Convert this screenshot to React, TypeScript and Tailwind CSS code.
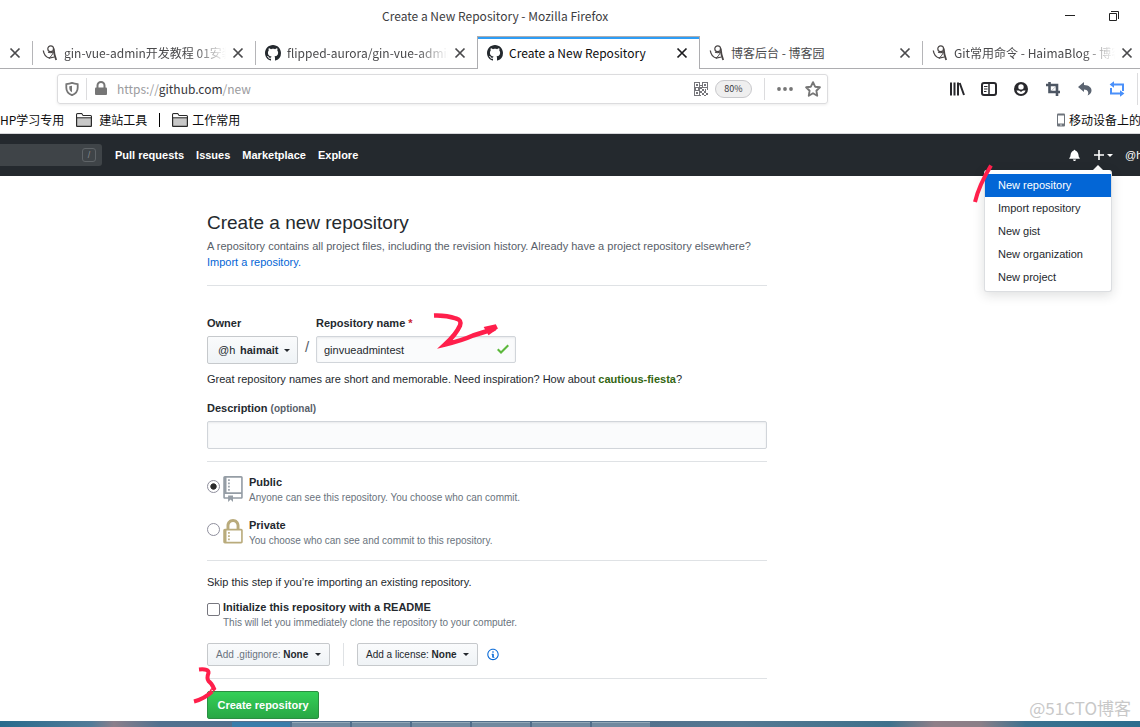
import React from "react";

const UI = "font-['Noto_Sans_CJK_SC','Noto_Sans',sans-serif]";
const WEB = "font-['Liberation_Sans',Arial,sans-serif]";

function GitHubMark() {
  return (
    <svg viewBox="0 0 16 16" className="h-4 w-4 shrink-0" fill="#24292e" aria-hidden="true">
      <path d="M8 0C3.58 0 0 3.58 0 8c0 3.54 2.29 6.53 5.47 7.59.4.07.55-.17.55-.38 0-.19-.01-.82-.01-1.49-2.01.37-2.53-.49-2.69-.94-.09-.23-.48-.94-.82-1.13-.28-.15-.68-.52-.01-.53.63-.01 1.08.58 1.23.82.72 1.21 1.87.87 2.33.66.07-.52.28-.87.51-1.07-1.78-.2-3.64-.89-3.64-3.95 0-.87.31-1.59.82-2.15-.08-.2-.36-1.02.08-2.12 0 0 .67-.21 2.2.82.64-.18 1.32-.27 2-.27s1.36.09 2 .27c1.53-1.04 2.2-.82 2.2-.82.44 1.1.16 1.92.08 2.12.51.56.82 1.27.82 2.15 0 3.07-1.87 3.75-3.65 3.95.29.25.54.73.54 1.48 0 1.07-.01 1.93-.01 2.2 0 .21.15.46.55.38A8.01 8.01 0 0 0 16 8c0-4.42-3.58-8-8-8z" />
    </svg>
  );
}

function BlogMark() {
  return (
    <svg viewBox="0 0 16 16" className="h-4 w-4 shrink-0" fill="none" stroke="#4a4646" aria-hidden="true">
      <path d="M1.300 5.500C1.800 9.500 4.500 12.300 7.500 13.200" strokeWidth="1.300" />
      <path d="M7 13.300c1.500-1.200 3.200-3.400 4.600-6.200" strokeWidth="1" />
      <circle cx="8.700" cy="3.800" r="2.900" strokeWidth="1.200" />
      <path d="M11.700 3.500c.2 3.500 1 8 2.500 11.500" strokeWidth="1.800" />
      <path d="M6 7.300c2.200.8 4 .6 5.500-.8M7 13.200l5.500-1.200" strokeWidth="1.200" />
    </svg>
  );
}

function CloseButton({ dark = false }: { dark?: boolean }) {
  return (
    <button type="button" aria-label="Close tab" className="flex h-6 w-3 shrink-0 items-center justify-center">
      <svg viewBox="0 0 12 12" className="h-3 w-3" fill="none" stroke={dark ? "#1c1c1f" : "#4a4a4c"} strokeWidth="1.700">
        <path d="M1.500 1.500l9 9M10.500 1.500l-9 9" />
      </svg>
    </button>
  );
}

function TabTitle({ children, fade = false }: { children: React.ReactNode; fade?: boolean }) {
  return (
    <span
      className={
        fade
          ? "min-w-0 flex-1 overflow-hidden whitespace-nowrap [mask-image:linear-gradient(to_left,transparent,black_32px)]"
          : "min-w-0 flex-1 overflow-hidden whitespace-nowrap"
      }
    >
      {children}
    </span>
  );
}

function Caret() {
  return <span aria-hidden="true" className="inline-block border-x-[3px] border-t-[3px] border-x-transparent border-t-current" />;
}

function Folder() {
  return (
    <svg viewBox="0 0 16 14" className="h-[14px] w-4 shrink-0" aria-hidden="true">
      <path d="M.6 12.900V1.600Q.6.7 1.500.7h4.200l1.200 1.800h7.600q.9 0 .9.900v9.500q0 .5-.5.5H1.100q-.5 0-.5-.5z" fill="#c8c8c8" stroke="#2a2a2a" strokeWidth="1.200" />
      <path d="M1.200 1.300h4.300l1.200 1.800h8v1.400H1.200z" fill="#fff" />
      <path d="M.6 4.800h14.800" stroke="#2a2a2a" strokeWidth="1" />
    </svg>
  );
}

function TitleBar() {
  return (
    <div className="flex h-9 items-start">
      <div className="w-[382px] shrink" />
      <h1 className="flex-1 whitespace-nowrap pt-1.5 text-[12px] leading-5 text-[#3d3d3f]">Create a New Repository - Mozilla Firefox</h1>
      <div className="flex gap-7 pr-[18px] pt-2">
        <button type="button" aria-label="Minimize" className="flex h-4 w-4 items-center justify-center">
          <svg viewBox="0 0 12 12" className="h-3 w-3"><path d="M1 5h10v1H1z" fill="#222" /></svg>
        </button>
        <button type="button" aria-label="Restore" className="flex h-4 w-4 items-center justify-center">
          <svg viewBox="0 0 12 12" className="h-3 w-3" fill="none" stroke="#222"><path d="M1.500 3.500h7v7h-7zM3 1.500h7.500V9" /></svg>
        </button>
      </div>
    </div>
  );
}

const idleTab = "flex items-center gap-[6px] border-b border-[#adadb0] pt-px shrink-0";

function TabStrip() {
  return (
    <div className="flex h-[33px] overflow-hidden text-[12px] leading-5 text-[#4a4a4c]">
      <div className={`${idleTab} w-8 justify-end pr-[11px]`}><CloseButton /></div>
      <div className={`${idleTab} w-[223px]`}>
        <span className="mr-[3px] h-6 border-l border-[#b5b5b8]" />
        <BlogMark />
        <TabTitle fade>gin-vue-admin开发教程 01安装</TabTitle>
        <span className="pr-[11px]"><CloseButton /></span>
      </div>
      <div className={`${idleTab} w-[222px]`}>
        <span className="mr-[3px] h-6 border-l border-[#b5b5b8]" />
        <GitHubMark />
        <TabTitle fade>flipped-aurora/gin-vue-admin</TabTitle>
        <span className="pr-[11px]"><CloseButton /></span>
      </div>
      <div className="flex w-[223px] shrink-0 items-center gap-[6px] border-x border-t border-[#adadb0] pl-[9px] pr-[11px] text-[#0c0c0d] shadow-[inset_0_2px_0_#2e9df5]">
        <GitHubMark />
        <TabTitle>Create a New Repository</TabTitle>
        <CloseButton dark />
      </div>
      <div className={`${idleTab} w-[222px] pl-[9px] pr-[11px]`}>
        <BlogMark />
        <TabTitle>博客后台 - 博客园</TabTitle>
        <CloseButton />
      </div>
      <div className={`${idleTab} min-w-[218px] flex-1`}>
        <span className="mr-[3px] h-6 border-l border-[#b5b5b8]" />
        <BlogMark />
        <TabTitle fade>Git常用命令 - HaimaBlog - 博客</TabTitle>
        <span className="pr-[7px]"><CloseButton /></span>
      </div>
    </div>
  );
}

function NavToolbar() {
  return (
    <div className="flex h-[39px] items-center">
      <div className="ml-[57px] flex h-[30px] w-[771px] shrink items-center rounded-[3px] border border-[#dcdcde] px-[7px] shadow-[0_1px_3px_rgba(0,0,0,0.08)]">
        <svg viewBox="0 0 14 14" className="h-[14px] w-[14px] shrink-0" fill="none" stroke="#767676" strokeWidth="1.800">
          <path d="M1.300 2.200Q4.500 1.800 7 .9q2.500.9 5.700 1.300v3.500c0 3.400-2 6-5.700 7.500-3.700-1.500-5.700-4.100-5.700-7.500z" />
          <path d="M7 3.800v6.400C5.200 9.200 4.300 7.700 4.300 5.700V4.300z" fill="#767676" stroke="none" />
        </svg>
        <span className="mx-[7px] h-[22px] border-l border-[#dcdcde]" />
        <svg viewBox="0 0 14 15" className="h-[15px] w-[14px] shrink-0">
          <path d="M3.500 7V4.500a3.500 3.500 0 0 1 7 0V7" fill="none" stroke="#767676" strokeWidth="2" />
          <rect x="1" y="6.500" width="12" height="7.500" rx="1" fill="#767676" />
        </svg>
        <div className="relative ml-[9px] h-5 min-w-0 flex-1 text-[12px] leading-5">
          <div aria-hidden="true" className="whitespace-nowrap text-[#9b9b9e]">https://<span className="text-[#38383d]">github.com</span>/new</div>
          <input id="address" type="text" aria-label="Address" className="absolute inset-0 w-full bg-transparent outline-none" />
        </div>
        <svg viewBox="0 0 14 14" className="h-[14px] w-[14px] shrink-0" fill="#75757a">
          <path fillRule="evenodd" d="M0 0h6v6H0zM1 1v4h4V1zM8 0h6v6H8zM9 1v4h4V1zM0 8h6v6H0zM1 9v4h4V9z" />
          <path d="M2 2h2v2H2zM10 2h2v2h-2zM2 10h2v2H2zM6 3h2v1H6zM6 5h2v2H6zM0 6h2v2H0zM4 6h2v2H4zM8 7h2v2H8zM11 7h1v2h-1zM13 6h1v2h-1zM6 9h2v2H6zM10 9h2v2h-2zM8 11h2v2H8zM12 11h2v2h-2zM10 13h2v1h-2zM6 13h1v1H6z" />
        </svg>
        <button type="button" className="ml-[7px] h-[18px] w-[37px] rounded-full border border-[#c9c9cc] bg-[#efefef] text-[9px] leading-4 text-[#38383d]">80%</button>
        <span className="ml-3 mr-[12px] h-[22px] border-l border-[#dcdcde]" />
        <button type="button" aria-label="Page actions" className="mr-3">
          <svg viewBox="0 0 16 4" className="h-1 w-4" fill="#767676"><circle cx="2" cy="2" r="1.900" /><circle cx="8" cy="2" r="1.900" /><circle cx="14" cy="2" r="1.900" /></svg>
        </button>
        <button type="button" aria-label="Bookmark this page" className="-mr-px">
          <svg viewBox="0 0 16 16" className="h-4 w-4" fill="none" stroke="#767676" strokeWidth="1.900" strokeLinejoin="round">
            <path d="M8 1.200l2.100 4.500 4.800.6-3.500 3.400.8 5L8 12.300l-4.200 2.400.8-5L1.100 6.300l4.800-.6z" />
          </svg>
        </button>
      </div>
      <div className="ml-auto flex shrink-0 items-center gap-4">
        <svg viewBox="0 0 16 16" className="h-4 w-4" fill="none" stroke="#28282c" strokeWidth="2"><path d="M2 1.500v13M5.500 1.500v13M9 1.500v13M10.700 2l4.300 12" /></svg>
        <svg viewBox="0 0 16 16" className="h-4 w-4" fill="none" stroke="#28282c" strokeWidth="2">
          <rect x="1" y="2" width="14" height="12" rx="2" /><path d="M8 2v12" strokeWidth="1.500" /><path d="M3 5.500h3.500M3 8h3.500M3 10.500h2.500" strokeWidth="1" />
        </svg>
        <svg viewBox="0 0 16 16" className="h-4 w-4"><circle cx="8" cy="8" r="7" fill="#28282c" /><circle cx="8" cy="6" r="2.700" fill="#fff" /><path d="M3.500 9.500h9c-.6 2-2.300 3.500-4.500 3.500s-3.900-1.500-4.500-3.500z" fill="#fff" /><path d="M5.500 8.700h5L8 11z" fill="#28282c" /></svg>
        <svg viewBox="0 0 16 16" className="h-4 w-4" fill="none" stroke="#4d5663" strokeWidth="2.600"><path d="M1 4h11v11M4.500 1v10h10.500" /><path d="M12 4.500l-7 6.500" strokeWidth="1" opacity=".35" /></svg>
        <svg viewBox="0 0 16 16" className="h-4 w-4" fill="#5b6471"><path d="M1 6l6-5v3c5 0 8 3 7.500 6-.3 2-1.800 3.800-4 4.500C12.300 12 11 8.500 7 8.500V11z" /></svg>
        <svg viewBox="0 0 16 16" className="h-4 w-4" fill="none" stroke="#4a90fa" strokeWidth="2"><path d="M4 3.500h10V10M2 7v5.500h10" /><path d="M5 .2L.6 3.500 5 6.800zM11 9.200l4.400 3.300-4.400 3.300z" fill="#4a90fa" stroke="none" /></svg>
        <span className="-ml-1 h-8 w-[3px] border-l border-[#dcdcde]" />
      </div>
    </div>
  );
}

function BookmarksBar() {
  return (
    <div className="flex h-[26px] items-center overflow-hidden whitespace-nowrap border-b border-[#d7d7da] pb-px text-[12px] leading-5 text-[#0c0c0d]">
      <a href="#php">HP学习专用</a>
      <a href="#sites" className="ml-3 flex items-center gap-[7px]"><Folder />建站工具</a>
      <span className="mx-3 h-[14px] border-l border-black" />
      <a href="#work" className="flex items-center gap-1"><Folder />工作常用</a>
      <a href="#mobile" className="-mr-px ml-auto flex items-center gap-[3px]">
        <svg viewBox="0 0 10 14" className="h-[14px] w-[10px]"><rect x="1" y=".5" width="8" height="13" rx="1" fill="#6e747c" /><path d="M2 2.500h6v8H2z" fill="#fff" /><circle cx="5" cy="12" r=".7" fill="#fff" /></svg>
        移动设备上的
      </a>
    </div>
  );
}

const menuItems = ["Import repository", "New gist", "New organization", "New project"];

function SiteHeader() {
  return (
    <header className="flex h-[42px] shrink-0 items-center bg-[#24292e] text-[11px] font-bold text-white">
      <div className="relative h-[22px] w-[102px] rounded-r-[3px] bg-[#3f4448]">
        <label htmlFor="search" className="sr-only">Search</label>
        <input id="search" type="text" className="h-full w-full bg-transparent px-2 outline-none" />
        <span className="absolute right-[6px] top-1 h-[14px] w-[14px] rounded-[3px] border border-[#5f6468] text-center text-[9px] font-normal leading-3 text-[#85898d]">/</span>
      </div>
      <nav className="flex gap-3 pl-[13px]">
        <a href="#pulls">Pull requests</a>
        <a href="#issues">Issues</a>
        <a href="#marketplace">Marketplace</a>
        <a href="#explore">Explore</a>
      </nav>
      <div className="ml-auto flex items-center">
        <button type="button" aria-label="Notifications" className="mr-[14px]">
          <svg viewBox="0 0 14 16" className="h-3 w-[11px]" fill="#fff"><path d="M14 12v1H0v-1l.73-.58c.77-.77.81-2.55 1.19-4.42C2.69 3.23 6 2 6 2c0-.55.45-1 1-1s1 .45 1 1c0 0 3.390 1.230 4.160 5 .38 1.880.42 3.660 1.190 4.420l.66.58H14zm-7 4c1.110 0 2-.89 2-2H5c0 1.110.89 2 2 2z" /></svg>
        </button>
        <div className="relative mr-3">
          <button type="button" aria-label="Create new" aria-expanded="true" className="flex items-center gap-[3px]">
            <svg viewBox="0 0 10 10" className="h-[10px] w-[10px]" stroke="#fff" strokeWidth="1.600"><path d="M5 0v10M0 5h10" /></svg>
            <Caret />
          </button>
          <div className="absolute right-px top-[15px] z-10 w-[128px]">
            <span aria-hidden="true" className="mx-auto mr-[9px] block h-[5px] w-[10px] border-x-[5px] border-b-[5px] border-x-transparent border-b-white" />
            <ul className="rounded-[3px] border border-[#dcdee1] border-t-white bg-white pb-[2px] pt-[3px] font-normal leading-[23px] text-[#24292e] shadow-[0_3px_12px_rgba(27,31,35,0.15)]">
              <li><a href="#new" className="block bg-[#0366d6] pl-[13px] text-white">New repository</a></li>
              {menuItems.map((t) => (
                <li key={t}><a href="#new" className="block pl-[13px]">{t}</a></li>
              ))}
            </ul>
          </div>
        </div>
        <span className="w-[15px] overflow-hidden whitespace-nowrap font-normal">@h</span>
      </div>
    </header>
  );
}

const smallButton = "flex items-center rounded-[2px] border border-[#c6c9cc] bg-gradient-to-b from-[#fafbfc] to-[#eff3f6] text-[#24292e]";
const field = "rounded-[2px] border border-[#d1d5da] bg-[#fafbfc] px-[7px] text-[11px] shadow-[inset_0_1px_2px_rgba(27,31,35,0.075)] outline-none";
const note = "text-[10px] text-[#6a737d]";

function Radio({ id, checked }: { id: string; checked?: boolean }) {
  return (
    <input
      id={id}
      type="radio"
      name="visibility"
      defaultChecked={checked}
      className="mt-[5px] h-[13px] w-[13px] shrink-0 appearance-none rounded-full border border-[#8f8f9d] bg-white checked:bg-[radial-gradient(circle_closest-side,#2b2b2b_50%,transparent_65%)]"
    />
  );
}

function Form() {
  return (
    <main className="ml-[207px] w-[560px] max-w-full pt-9 text-[11px] leading-4 text-[#24292e]">
      <h2 className="text-[19px] leading-[22px]">Create a new repository</h2>
      <p className="mt-1 border-b border-[#dfe2e5] pb-[15px] text-[#586069]">
        A repository contains all project files, including the revision history. Already have a project repository elsewhere?
        <br />
        <a href="#import" className="text-[#0366d6]">Import a repository.</a>
      </p>

      <div className="mt-[29px] flex">
        <div>
          <span className="block font-bold">Owner</span>
          <button type="button" aria-haspopup="menu" className={`${smallButton} mt-[5px] h-7 w-[91px] gap-[5px] pl-[10px] text-[11px] font-bold`}>
            <span className="w-[17px] shrink-0 font-normal">@h</span>haimait<Caret />
          </button>
        </div>
        <span className="w-[18px] pt-[22px] text-center text-[15px] leading-5 text-[#586069]">/</span>
        <div>
          <label htmlFor="repo" className="block font-bold">Repository name <span className="text-[#cb2431]">*</span></label>
          <div className="relative mt-[5px]">
            <input id="repo" type="text" defaultValue="ginvueadmintest" className={`${field} block h-[27px] w-[200px]`} />
            <svg viewBox="0 0 12 16" className="absolute right-[6px] top-[5px] h-4 w-[14px]" fill="#5cb83c" aria-hidden="true"><path d="M12 5l-8 8-4-4 1.500-1.500L4 10l6.500-6.500z" /></svg>
          </div>
        </div>
      </div>
      <p className="mt-[7px]">Great repository names are short and memorable. Need inspiration? How about <strong className="text-[#336611]">cautious-fiesta</strong>?</p>

      <label htmlFor="description" className="mt-[13px] block font-bold">Description <span className="text-[10px] text-[#586069]">(optional)</span></label>
      <input id="description" type="text" className={`${field} mt-1 block h-7 w-full`} />

      <fieldset className="mt-3 border-y border-[#dfe2e5] pb-3 pt-[13px]">
        <legend className="sr-only">Visibility</legend>
        <div className="flex">
          <Radio id="public" checked />
          <svg viewBox="0 0 12 16" className="ml-[3px] mt-px h-[26px] w-5 shrink-0" fill="#959da5" aria-hidden="true"><path d="M4 9H3V8h1v1zm0-3H3v1h1V6zm0-2H3v1h1V4zm0-2H3v1h1V2zm8-1v12c0 .55-.45 1-1 1H6v2l-1.500-1.500L3 16v-2H1c-.55 0-1-.45-1-1V1c0-.55.45-1 1-1h10c.55 0 1 .45 1 1zm-1 10H1v2h2v-1h3v1h5v-2zm0-10H2v9h9V1z" /></svg>
          <label htmlFor="public" className="ml-[6px] block h-[43px] leading-[15px]"><strong className="block">Public</strong><span className={note}>Anyone can see this repository. You choose who can commit.</span></label>
        </div>
        <div className="flex">
          <Radio id="private" />
          <svg viewBox="0 0 12 16" className="ml-[3px] mt-px h-[26px] w-5 shrink-0" fill="#b9ab7c" aria-hidden="true"><path d="M4 13H3v-1h1v1zm8-6v7c0 .55-.45 1-1 1H1c-.55 0-1-.45-1-1V7c0-.55.45-1 1-1h1V4c0-2.200 1.800-4 4-4s4 1.800 4 4v2h1c.55 0 1 .45 1 1zM3.800 6h4.410V4c0-1.220-.98-2.200-2.200-2.200-1.220 0-2.200.98-2.200 2.200v2H3.800zM11 7H2v7h9V7zM4 8H3v1h1V8zm0 2H3v1h1v-1z" /></svg>
          <label htmlFor="private" className="ml-[6px] block leading-[15px]"><strong className="block">Private</strong><span className={note}>You choose who can see and commit to this repository.</span></label>
        </div>
      </fieldset>

      <p className="mt-[13px]">Skip this step if you’re importing an existing repository.</p>
      <div className="mt-[10px] flex">
        <input id="readme" type="checkbox" className="mt-[3px] h-[13px] w-[13px] shrink-0 appearance-none rounded-[2px] border border-[#77777f] bg-white" />
        <label htmlFor="readme" className="ml-[3px] block leading-[15px]"><strong className="block">Initialize this repository with a README</strong><span className={note}>This will let you immediately clone the repository to your computer.</span></label>
      </div>
      <div className="mt-[13px] flex items-center border-b border-[#dfe2e5] pb-3">
        <button type="button" aria-haspopup="menu" className={`${smallButton} h-[23px] w-[123px] justify-between px-2 text-[10px]`}><span><span className="text-[#6a737d]">Add .gitignore:</span> <strong>None</strong></span><Caret /></button>
        <span className="mx-[13px] h-[23px] border-l border-[#dfe2e5]" />
        <button type="button" aria-haspopup="menu" className={`${smallButton} h-[23px] w-[121px] justify-between px-2 text-[10px]`}><span>Add a license: <strong>None</strong></span><Caret /></button>
        <svg viewBox="0 0 14 16" className="ml-[9px] h-[13px] w-3" fill="#0366d6" aria-hidden="true"><path d="M6.300 5.690a.942.942 0 0 1-.28-.7c0-.28.09-.52.28-.7.19-.18.42-.28.7-.28.28 0 .52.09.7.28.18.19.28.42.28.7 0 .28-.09.52-.28.7a1 1 0 0 1-.7.3c-.28 0-.52-.11-.7-.3zM8 7.990c-.02-.25-.11-.48-.31-.69-.2-.19-.42-.3-.69-.31H6c-.27.02-.48.13-.69.31-.2.2-.3.44-.31.69h1v3c.02.27.11.5.31.69.2.2.42.31.69.31h1c.27 0 .48-.11.69-.31.2-.19.3-.42.31-.69H8V7.980v.01zM7 2.300c-3.140 0-5.700 2.540-5.700 5.680 0 3.140 2.560 5.700 5.700 5.700s5.700-2.550 5.700-5.700c0-3.150-2.560-5.690-5.700-5.690v.01zM7 .98c3.860 0 7 3.140 7 7s-3.140 7-7 7-7-3.120-7-7 3.140-7 7-7z" /></svg>
      </div>
      <button type="submit" className="mb-[2px] mt-3 block h-7 w-[112px] rounded-[2px] border border-[#2a8f42] bg-gradient-to-b from-[#34d058] to-[#28a745] text-[11px] font-bold text-white">Create repository</button>
    </main>
  );
}

function Marks() {
  return (
    <svg viewBox="0 0 1140 727" className="pointer-events-none absolute left-0 top-0 z-20 h-[727px] w-[1140px] max-w-none" fill="none" stroke="#ff1f4b" strokeWidth="4" aria-hidden="true">
      <path d="M991 165.500C984 177 978 189 975 202" />
      <path d="M434 315.500q12-.5 22 3 6 1.500 4 7-4 9-15 19 17-4 28-9 10-3 22-7" strokeWidth="4.500" />
      <path d="M486 328l9-2 1 2-7 5z" strokeWidth="3" fill="#ff1f4b" />
      <path d="M199 669.500q10-1 9.500 3.500-2 5 0 8 3 2 5.500 7.500-4 4-2 3-7 7-18 10" />
    </svg>
  );
}

const taskButtons = [0, 1, 2, 3, 4, 5];

export default function App() {
  return (
    <div className={`relative flex min-h-screen flex-col overflow-hidden bg-white ${UI}`}>
      <TitleBar />
      <TabStrip />
      <NavToolbar />
      <BookmarksBar />
      <div className={WEB}>
        <SiteHeader />
        <Form />
      </div>
      <div className="mt-auto flex h-[6px] gap-[2px] bg-[linear-gradient(90deg,#286b8d_0%,#527b98_8%,#8b7f8b_10%,#52718f_14%,#526d89_50%,#557892_65%,#3f718c_78%,#8f7f88_82%,#8b7f88_86%,#3c718f_90%,#2c6d8e_100%)] pl-[232px] pt-[1px]">
        <span className="w-[58px] bg-[#397daa]" />
        {taskButtons.map((n) => (
          <span key={n} className="w-[58px] border-t border-[#94a9b8] bg-[#71899f]" />
        ))}
      </div>
      <div className="absolute bottom-[7px] right-[9px] text-[17px] leading-6 text-[#c8c8c8]">@51CTO博客</div>
      <Marks />
    </div>
  );
}
